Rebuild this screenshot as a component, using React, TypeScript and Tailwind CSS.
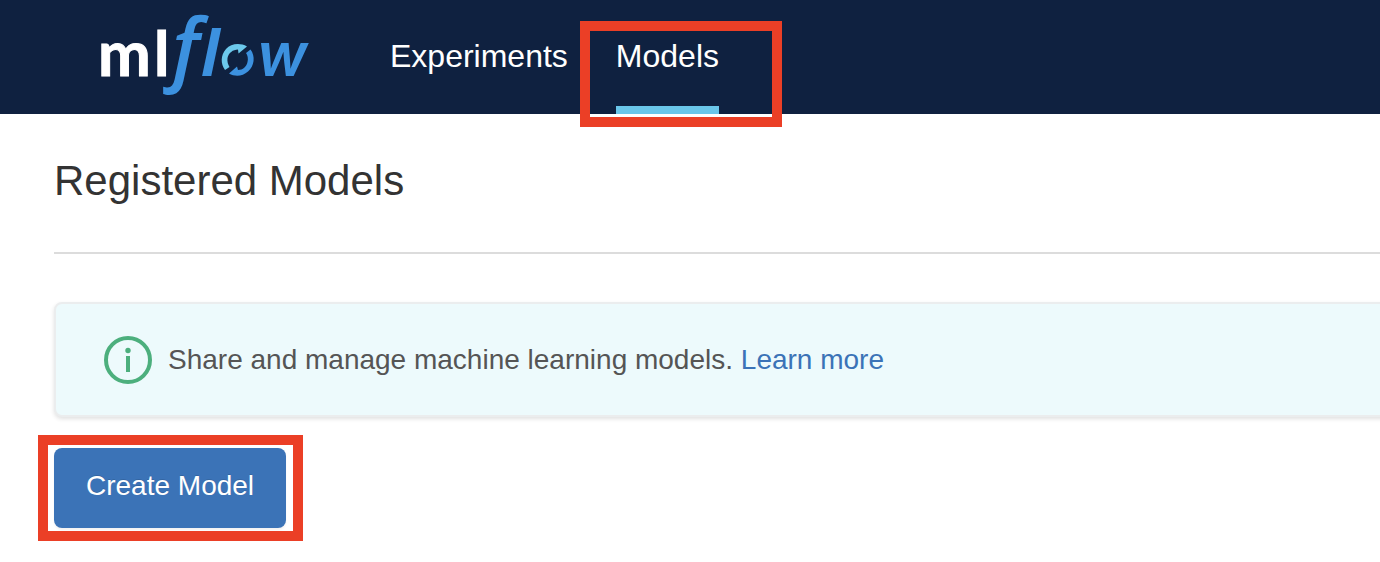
function MlflowLogo() {
  return (
    <svg viewBox="90 0 240 114" className="h-[114px] w-60 overflow-visible" role="img" aria-label="mlflow">
      <g fontFamily="Lato, sans-serif" fontWeight="700" fill="#ffffff" stroke="#ffffff" strokeWidth="1">
        <text x="98" y="76" fontSize="63">m</text>
        <text x="154" y="76" fontSize="62">l</text>
      </g>
      <g fontFamily="'Open Sans', sans-serif" fontStyle="italic" fontWeight="600" fill="#3c91df">
        <text x="172" y="76" fontSize="80">f</text>
        <text x="201" y="76" fontSize="62" fontWeight="700">l</text>
        <text x="257" y="76" fontSize="60" fontFamily="Inter, sans-serif">w</text>
      </g>
      <path
        d="M225 70 C220.500 64 220.500 55 226 49 C231 43.500 240 42.500 247 46.500 L238.500 53.500 L238 49.500 C233 49.500 228.500 53 227.500 58 C227 61.500 228 64.500 229.500 67 Z"
        fill="#6cc9ec"
      />
      <path
        d="M250.500 49.500 C255.500 56 254.500 66 248 71.500 C242.500 76.500 235 77 229 73.500 L237 66.500 L238 70 C243 70 246.500 66.500 247.500 62 C248.500 58.500 247.500 55 246 53 Z"
        fill="#3c91df"
      />
    </svg>
  );
}

function Highlight({ className }: { className: string }) {
  return <span aria-hidden="true" className={`pointer-events-none absolute z-10 border-[10px] border-[#eb3f26] ${className}`} />;
}

export default function App() {
  return (
    <div className="min-h-screen overflow-x-hidden bg-white font-['Liberation_Sans',Arial,sans-serif]">
      <header className="flex h-[114px] items-stretch bg-[#0f2140] pl-[90px] text-white">
        <a href="#home" aria-label="mlflow home">
          <MlflowLogo />
        </a>
        <nav className="ml-[60px] flex gap-12 text-[32px] leading-10">
          <a href="#experiments" className="pt-9">Experiments</a>
          <a href="#models" aria-current="page" className="relative border-b-8 border-[#6ac6ea] pt-9">
            Models
            <Highlight className="-left-9 top-[21px] h-[106px] w-[202px]" />
          </a>
        </nav>
      </header>
      <main className="pl-[54px]">
        <h1 className="border-b-2 border-[#dcdcdc] pt-[42px] pb-[46px] text-[42px] leading-[50px] text-[#333333]">
          Registered Models
        </h1>
        <section className="-mr-4 mt-12 rounded-lg border-2 border-[#ebedee] bg-[#edfafc] pt-8 pb-[31px] pl-12 shadow-[0_2px_4px_rgba(0,0,0,0.12)]">
          <div className="flex items-center gap-4">
            <svg viewBox="0 0 48 48" className="size-12 shrink-0" aria-hidden="true">
              <circle cx="24" cy="24" r="22" fill="none" stroke="#4caf7d" strokeWidth="4" />
              <circle cx="24" cy="14.500" r="2.700" fill="#4caf7d" />
              <path d="M24 20V36" stroke="#4caf7d" strokeWidth="4" />
            </svg>
            <p className="text-[28px] leading-10 text-[#555555]">
              Share and manage machine learning models.{" "}
              <a href="#learn-more" className="text-[#3b73b7]">Learn more</a>
            </p>
          </div>
        </section>
        <div className="relative mt-[31px] w-fit">
          <button type="button" className="flex h-20 items-center rounded-lg bg-[#3b73b7] px-8 pb-1 text-[28px] leading-10 text-white shadow-[0_2px_2px_rgba(0,0,0,0.05)] text-shadow-[0_-1px_0_rgba(0,0,0,0.12)]">
            Create Model
          </button>
          <Highlight className="-left-4 -top-[13px] h-[106px] w-[265px]" />
        </div>
      </main>
    </div>
  );
}
